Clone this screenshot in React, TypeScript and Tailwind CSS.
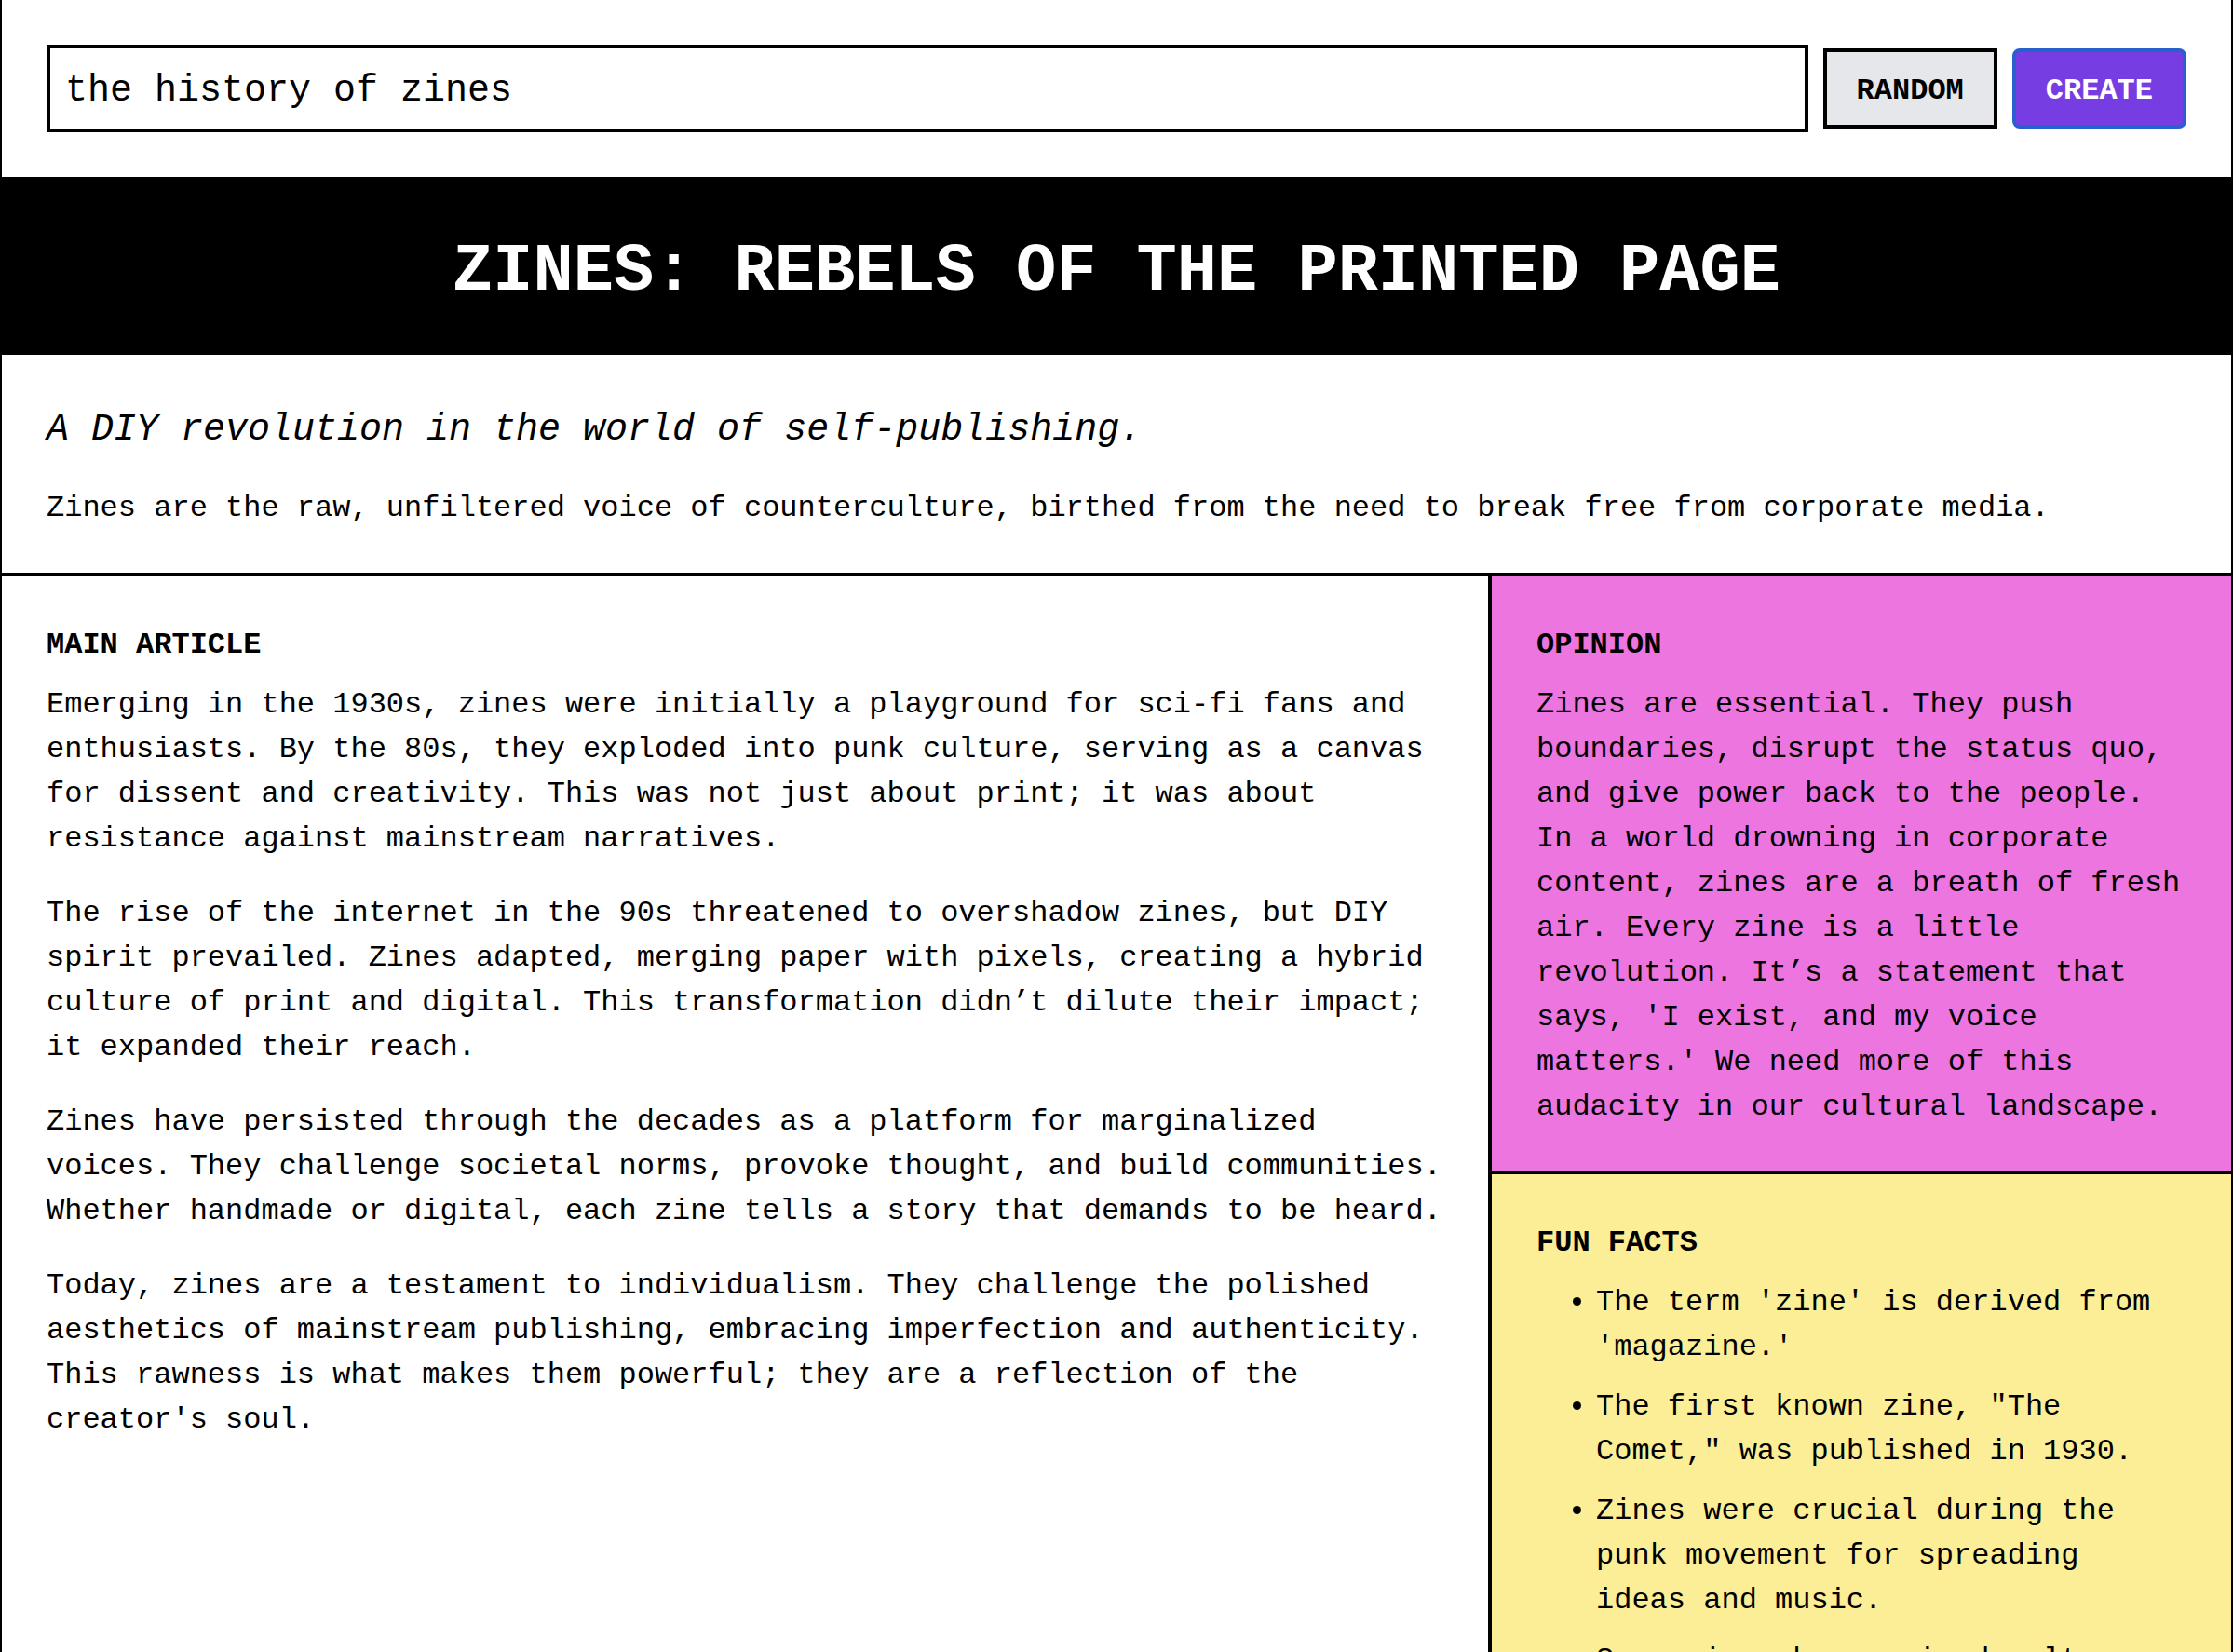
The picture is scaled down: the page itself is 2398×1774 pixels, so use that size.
import React from 'react';

const articleParagraphs = [
  'Emerging in the 1930s, zines were initially a playground for sci-fi fans and enthusiasts. By the 80s, they exploded into punk culture, serving as a canvas for dissent and creativity. This was not just about print; it was about resistance against mainstream narratives.',
  'The rise of the internet in the 90s threatened to overshadow zines, but DIY spirit prevailed. Zines adapted, merging paper with pixels, creating a hybrid culture of print and digital. This transformation didn’t dilute their impact; it expanded their reach.',
  'Zines have persisted through the decades as a platform for marginalized voices. They challenge societal norms, provoke thought, and build communities. Whether handmade or digital, each zine tells a story that demands to be heard.',
  "Today, zines are a testament to individualism. They challenge the polished aesthetics of mainstream publishing, embracing imperfection and authenticity. This rawness is what makes them powerful; they are a reflection of the creator's soul.",
];

const funFacts = [
  "The term 'zine' is derived from 'magazine.'",
  'The first known zine, "The Comet," was published in 1930.',
  'Zines were crucial during the punk movement for spreading ideas and music.',
  "Some zines have gained cult status and are now collector's items.",
];

const App = () => {
  return (
    <div className="min-h-screen bg-white border-x-2 border-black text-black font-['Liberation_Mono',monospace]">
      {/* Prompt bar */}
      <div className="flex items-center gap-4 p-12">
        <input
          defaultValue="the history of zines"
          className="flex-1 min-w-0 border-4 border-black bg-white px-4 pt-[18px] pb-[12px] text-[40px] leading-[56px] text-black outline-none"
        />
        <button className="border-4 border-black bg-gray-200 px-8 pt-[18px] pb-[12px] text-[32px] leading-[48px] font-bold">
          RANDOM
        </button>
        <button className="rounded-lg border-4 border-[#2a5fce] bg-[#763de2] px-8 pt-[18px] pb-[12px] text-[32px] leading-[48px] font-bold text-white">
          CREATE
        </button>
      </div>

      {/* Title */}
      <div className="bg-black pt-[62px] pb-[49px] text-center">
        <h1 className="text-[72px] leading-[80px] font-bold text-white">
          ZINES: REBELS OF THE PRINTED PAGE
        </h1>
      </div>

      {/* Intro */}
      <div className="px-12 pt-[53px] pb-[45px]">
        <p className="mb-8 text-[40px] leading-[56px] italic">
          A DIY revolution in the world of self-publishing.
        </p>
        <p className="text-[32px] leading-[48px]">
          Zines are the raw, unfiltered voice of counterculture, birthed from the need to break free from corporate media.
        </p>
      </div>

      {/* Columns */}
      <div className="grid grid-cols-3 border-t-4 border-black text-[32px] leading-[48px]">
        <div className="col-span-2 px-12 pt-[50px] pb-12">
          <h2 className="mb-4 font-bold">MAIN ARTICLE</h2>
          <div className="space-y-8">
            {articleParagraphs.map((p, i) => (
              <p key={i}>{p}</p>
            ))}
          </div>
        </div>

        <div className="flex flex-col border-l-4 border-black">
          <div className="bg-[#ec75e0] px-12 pt-[50px] pb-[44px]">
            <h2 className="mb-4 font-bold">OPINION</h2>
            <p>
              Zines are essential. They push boundaries, disrupt the status quo, and give power back to the people. In a world drowning in corporate content, zines are a breath of fresh air. Every zine is a little revolution. It’s a statement that says, 'I exist, and my voice matters.' We need more of this audacity in our cultural landscape.
            </p>
          </div>
          <div className="flex-1 border-t-4 border-black bg-[#fbee96] px-12 pt-[50px] pb-12">
            <h2 className="mb-4 font-bold">FUN FACTS</h2>
            <ul className="list-disc space-y-4 pl-16 pr-1">
              {funFacts.map((f, i) => (
                <li key={i}>{f}</li>
              ))}
            </ul>
          </div>
        </div>
      </div>
    </div>
  );
};

export default App;
